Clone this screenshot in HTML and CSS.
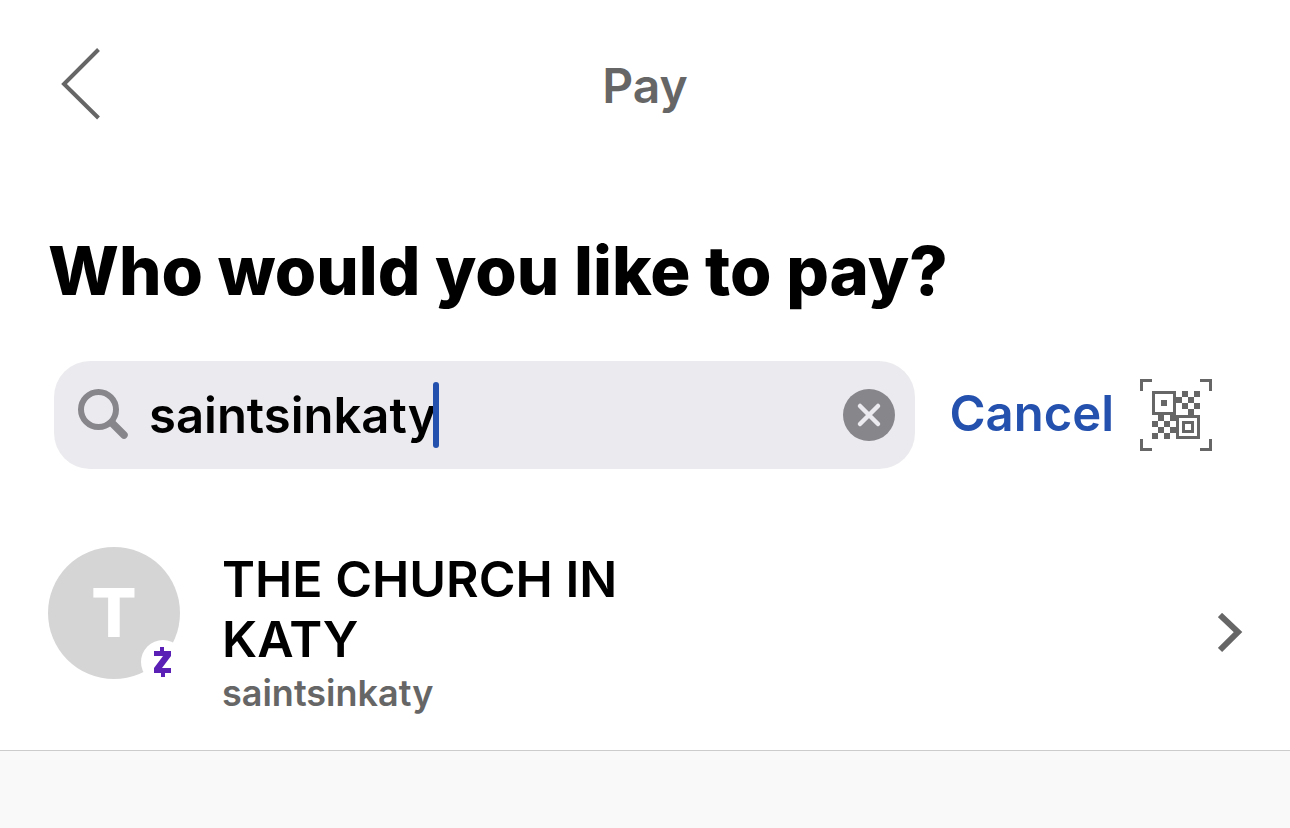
FILE: index.html
```html
<!DOCTYPE html>
<html lang="en">
<head>
  <meta charset="UTF-8">
  <meta name="viewport" content="width=device-width, initial-scale=1.0">
  <title>Pay</title>
  <link rel="stylesheet" href="styles.css">
</head>
<body>
  <!-- Top Bar -->
  <header class="top-bar">
    <button class="back" type="button" aria-label="Back">
      <svg width="40" height="72" viewBox="0 0 40 72" fill="none" stroke="#666" stroke-width="4">
        <path d="M38.500 1.500L4 36L38.500 70" />
      </svg>
    </button>
    <span class="title">Pay</span>
  </header>

  <main>
    <h1>Who would you like to pay?</h1>

    <!-- Search -->
    <form class="search-row">
      <div class="search-box">
        <svg class="search-icon" width="52" height="52" viewBox="0 0 52 52" fill="none" stroke="#87868b">
          <circle cx="20.500" cy="20.500" r="17.500" stroke-width="6" />
          <path d="M34 34L46 46" stroke-width="7.500" stroke-linecap="round" />
        </svg>
        <input type="text" value="saintsinkaty" aria-label="Search recipients">
        <span class="caret"></span>
        <button class="clear" type="button" aria-label="Clear">
          <svg width="52" height="52" viewBox="0 0 52 52">
            <circle cx="26" cy="26" r="26" fill="#87868b" />
            <path d="M17 17L35 35M35 17L17 35" stroke="#ebeaee" stroke-width="4.500" stroke-linecap="round" />
          </svg>
        </button>
      </div>
      <button class="cancel" type="button">Cancel</button>
      <button class="scan" type="button" aria-label="Scan QR code">
        <svg width="72" height="72" viewBox="0 0 24 24" fill="#666" shape-rendering="crispEdges">
          <path d="M0 0h4v1H1v3H0zM20 0h4v4h-1V1h-3zM0 20h1v3h3v1H0zM23 20h1v4h-4v-1h3z" />
          <path fill-rule="evenodd" d="M4 4h8v8H4zM5 5v6h6V5zM7 7h2v2H7z" />
          <path fill-rule="evenodd" d="M12 12h8v8h-8zM13 13v6h6v-6zM14 14h4v4h-4zM15 15v2h2v-2z" />
          <path d="M14 4h2v2h-2zM18 4h2v2h-2zM12 6h2v2h-2zM16 6h2v2h-2zM14 8h2v2h-2zM18 8h2v2h-2zM16 10h2v2h-2z" />
          <path d="M6 12h2v2H6zM10 12h2v2h-2zM4 14h2v2H4zM8 14h2v2H8zM6 16h2v2H6zM10 16h2v2h-2zM4 18h2v2H4zM8 18h2v2H8z" />
        </svg>
      </button>
    </form>
  </main>

  <!-- Results -->
  <ul class="results">
    <li>
      <a class="recipient" href="#">
        <span class="avatar">
          T
          <svg class="badge" width="44" height="44" viewBox="0 0 44 44">
            <circle cx="22" cy="22" r="22" fill="#fff" />
            <path d="M19 7h4v4h7v5l-9 12h9v5h-6v4h-4v-4h-7v-5l9-12h-9v-5h6z" fill="#5a20b5" />
          </svg>
        </span>
        <span class="details">
          <span class="name">THE CHURCH IN KATY</span>
          <span class="tag">saintsinkaty</span>
        </span>
        <svg class="chevron" width="26" height="40" viewBox="0 0 26 40" fill="none" stroke="#666" stroke-width="6">
          <path d="M2 2L20 19L2 37" />
        </svg>
      </a>
    </li>
  </ul>
</body>
</html>
```
FILE: styles.css
```css
/* General Reset */
* {
  margin: 0;
  padding: 0;
  box-sizing: border-box;
}

body {
  background: #f9f9f9;
  color: #000;
  font-family: 'Inter', sans-serif;
}

button {
  background: none;
  border: none;
  font: inherit;
  cursor: pointer;
}

svg {
  display: block;
}

/* Top Bar */
.top-bar {
  display: grid;
  grid-template-columns: 1fr auto 1fr;
  align-items: center;
  padding: 48px 60px 40px;
  background: #fff;
}

.back {
  justify-self: start;
}

.title {
  padding-top: 4px;
  color: #666;
  font-size: 48px;
  font-weight: 600;
  line-height: 68px;
}

/* Heading and Search */
main {
  padding: 71px 78px 48px 48px;
  background: #fff;
}

h1 {
  font-size: 67px;
  font-weight: 800;
  line-height: 80px;
}

.search-row {
  display: flex;
  align-items: center;
  margin-top: 50px;
  padding-left: 6px;
}

.search-box {
  flex: 1;
  display: flex;
  align-items: center;
  height: 108px;
  padding: 0 20px 0 24px;
  border-radius: 36px;
  background: #ebeaee;
}

.search-box input {
  field-sizing: content;
  min-width: 0;
  margin-left: 19px;
  border: none;
  outline: none;
  background: none;
  font-family: inherit;
  font-size: 49px;
  font-weight: 600;
}

.caret {
  width: 6px;
  height: 66px;
  margin-left: -4px;
  border-radius: 3px;
  background: #2451ae;
}

.clear {
  margin-left: auto;
}

.cancel {
  margin: 0 26px 0 34px;
  padding-bottom: 4px;
  color: #2451ae;
  font-size: 49px;
  font-weight: 600;
}

/* Results */
.results {
  list-style: none;
  background: #fff;
  border-bottom: 1px solid #ccc;
}

.recipient {
  display: flex;
  align-items: center;
  padding: 30px 46px 32px 48px;
  color: inherit;
  text-decoration: none;
}

.avatar {
  position: relative;
  align-self: flex-start;
  width: 132px;
  height: 132px;
  border-radius: 50%;
  background: #d5d5d5;
  color: #fff;
  font-size: 67px;
  font-weight: 800;
  line-height: 132px;
  text-align: center;
}

.badge {
  position: absolute;
  right: -5px;
  bottom: -5px;
}

.details {
  width: 420px;
  margin-left: 42px;
  padding-top: 2px;
}

.name,
.tag {
  display: block;
}

.name {
  font-size: 50px;
  font-weight: 600;
  line-height: 60px;
}

.tag {
  color: #666;
  font-size: 36px;
  font-weight: 600;
  line-height: 49px;
}

.chevron {
  margin-left: auto;
}
```
